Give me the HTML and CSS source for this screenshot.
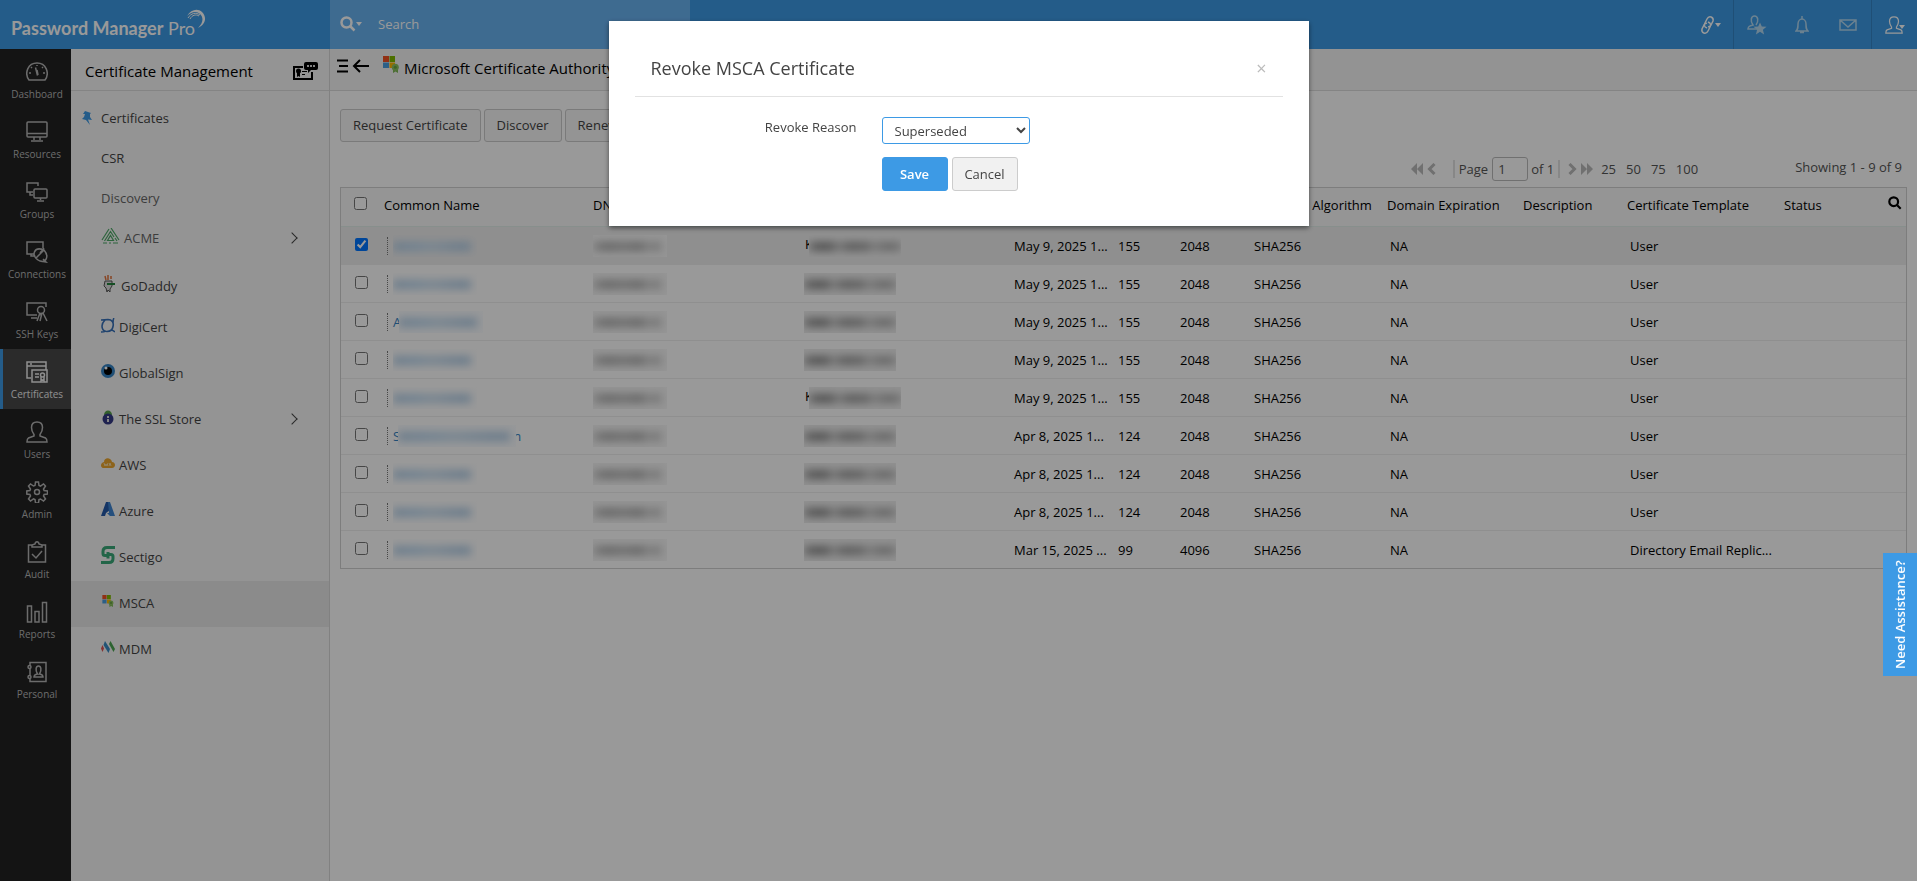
FILE: index.html
```html
<!DOCTYPE html>
<html lang="en">
<head>
    <meta charset="UTF-8">
    <meta name="viewport" content="width=device-width, initial-scale=1.0">
    <title>Password Manager Pro</title>
    <link rel="stylesheet" href="styles.css">
</head>
<body>
    <!-- Shared icons -->
    <svg class="sprite" aria-hidden="true">
        <symbol id="i-user" viewBox="0 0 22 22"><path d="M8 13.500C6 11 5.500 8.500 5.500 6.500C5.500 3 7.800 1 11 1s5.500 2 5.500 5.500c0 2-.5 4.500-2.500 7v1.500l5.500 2c1 .5 1.500 1.500 1.500 4H1c0-2.500.5-3.500 1.500-4L8 15z"/></symbol>
        <symbol id="i-ms" viewBox="0 0 16 17"><path fill="#f25022" d="M0 0h6v6H0z"/><path fill="#7fba00" d="M6.500 0h5.500v6H6.500z"/><path fill="#4a9fe0" d="M0 6.500h6V12H0z"/><path fill="#ffb900" d="M6.500 6.500H12V12H6.500z"/><path fill="#7fb857" d="M10 12h5v5l-2.500-1.500L10 17z"/><circle cx="12.300" cy="11.200" r="3.500" fill="#8cc363"/><circle cx="12.300" cy="11.200" r="1.500" fill="#6aa33f"/></symbol>
        <symbol id="i-lens" viewBox="0 0 16 16"><circle cx="6.500" cy="6.500" r="5"/><path d="M10.500 10.500L14.500 14.500"/></symbol>
    </svg>

    <header class="topbar">
        <a href="#" class="logo"><span><b>Password Manager</b> Pro</span><svg width="22" height="20" viewBox="0 0 22 20"><path d="M1 7C5 0 12-1 16 3c5 5 4 12-4 16 5-5 6-10 2-14C11 2 6 2 1 7z" fill="#fff"/><path d="M2 9C5 4 10 3 14 6M4 10c2-4 6-5 9-3" fill="none" stroke="#fff"/></svg></a>
        <div class="search">
            <svg class="stroke thick" width="16" height="16"><use href="#i-lens"/></svg>
            <span class="caret"></span>
            <input type="text" placeholder="Search" aria-label="Search">
        </div>
        <div class="top-actions">
            <button class="act" aria-label="Links"><svg class="stroke" width="15" height="20" viewBox="0 0 15 20"><path d="M7 13c-3-1-3-3-2-5l2-4c2-4 7-2 6 2l-2 4c-.5 1-1.500 2-3 1.500"/><path d="M8 7c3 1 3 3 2 5l-2 4c-2 4-7 2-6-2l2-4c.5-1 1.500-2 3-1.500"/></svg><span class="caret"></span></button>
            <button class="act dim line" aria-label="Access requests"><svg width="20" height="20" viewBox="0 0 20 20"><path class="stroke" d="M10 14H1c0-2 .5-3 5-4C3 6 4 1 7.500 1S12 6 9 10"/><path fill="currentColor" d="M13 7.500l1.800 4 4.700.3-3.600 2.900 1.200 4.800-4.100-2.700-4.100 2.700 1.200-4.800L6.500 11.800l4.700-.3z"/></svg></button>
            <button class="act dim" aria-label="Alerts"><svg class="stroke" width="14" height="18" viewBox="0 0 14 18"><path d="M1 15h12c-2-2-2-3-2-7 0-3-2-5-4-5S3 5 3 8c0 4 0 5-2 7zM7 3V0M5 16.500h4"/></svg></button>
            <button class="act dim" aria-label="Messages"><svg class="stroke" width="18" height="12" viewBox="0 0 18 12"><path d="M1 1h16v10H1zM1 1l8 7 8-7"/></svg></button>
            <button class="act line" aria-label="My account"><svg class="stroke" width="18" height="18"><use href="#i-user"/></svg><span class="caret over"></span></button>
        </div>
    </header>

    <div class="shell">
        <nav class="mainnav">
            <a href="#"><svg viewBox="0 0 22 22"><path d="M3 19C-2 12 2 2 11 2s13 10 8 17zM9.500 6.500l2 8M11 4v1M5 6l1 1M17 6l-1 1M3 12h2M17 12h2"/><path d="M11 9l1 5"/></svg>Dashboard</a>
            <a href="#"><svg viewBox="0 0 22 22"><rect x="1" y="1" width="20" height="15" rx="1"/><path d="M1 12.500h20M8 16v3M14 16v3M5 20h12"/></svg>Resources</a>
            <a href="#"><svg viewBox="0 0 22 22"><path d="M12 5V2H1v9h6M4 11v3h3"/><rect x="8" y="8" width="13" height="9" rx="1"/><path d="M14.500 17v2M11 20h7"/></svg>Groups</a>
            <a href="#"><svg viewBox="0 0 22 22"><path d="M17 7V1H1v12h7M5 13v2h3M18 9C8 5 5 14 12 19s12-3 6-10L10 17M14 12l4-5M14 20l6 1-3-3"/></svg>Connections</a>
            <a href="#"><svg viewBox="0 0 22 22"><path d="M20 6V2H1v12h10M5 17h6"/><circle cx="15" cy="9" r="3.500"/><path d="M14 12l-3 8M17 12l4 8M16 12l-2 8M15 12v3"/></svg>SSH Keys</a>
            <a href="#" class="active"><svg viewBox="0 0 22 22"><path d="M5 17H1V1h19v8M1 5h19M4 3h2"/><rect x="6" y="9" width="15" height="12"/><path d="M9 13h4M9 16h4M15 16v4l1.500-1 1.500 1v-4"/><circle cx="16.500" cy="14" r="2"/></svg>Certificates</a>
            <a href="#"><svg><use href="#i-user"/></svg>Users</a>
            <a href="#"><svg viewBox="0 0 22 22"><circle cx="11" cy="11" r="2.500"/><path d="M9.500 1h3l.5 3.500 1.500.6L17.500 3l2 2-2 3 .6 1.500 3.400.5v3l-3.400.5-.6 1.500 2 3-2 2-3-2-1.500.6-.5 3.400h-3L9 18.500l-1.500-.6-3 2.100-2-2 2-3-.6-1.500L.8 13v-3l3.100-.5.6-1.500-2-3 2-2 3 2L9 4.500z"/></svg>Admin</a>
            <a href="#"><svg viewBox="0 0 22 22"><path d="M6 4H2.500v17h17V4H16M6 6h10V4l-3-1c-.5-3-3.500-3-4 0L6 4zM6 13l4 4 6-7"/></svg>Audit</a>
            <a href="#"><svg viewBox="0 0 22 22"><path d="M1.500 5h4v16h-4zM9 10.500h4V21H9zM16.500 1.500h4V21h-4z"/></svg>Reports</a>
            <a href="#"><svg viewBox="0 0 22 22"><path d="M4 4V1.500h16v19H4V18M4 8v6M8 16h9c0-2-1-2.500-3.500-3C16 9 15 5 12.500 5S9 9 11.500 13C9 13.500 8 14 8 16z"/><circle cx="3.500" cy="6" r="1.500"/><circle cx="3.500" cy="16" r="1.500"/></svg>Personal</a>
        </nav>

        <aside class="sidebar">
            <div class="side-head">
                <h2>Certificate Management</h2>
                <svg width="26" height="20" viewBox="0 0 26 20"><path d="M11 6H2v12h18v-7" fill="none" stroke="#000" stroke-width="2"/><circle cx="6.500" cy="10" r="2.500"/><path d="M5 11h3v5l-1.500-1L5 16zM10 10h5v1h-5zM10 13h3v1h-3zM14 1h10q2 0 2 2v4q0 2-2 2h-5l-3 3V9h-2q-2 0-2-2V3q0-2 2-2z"/><path d="M15 4h2v2h-2zM18 4h2v2h-2zM21 4h2v2h-2z" fill="#ddd"/></svg>
            </div>
            <ul class="side-list">
                <li class="short pinned"><a href="#"><svg class="pin" width="10" height="14" viewBox="0 0 10 14"><path fill="#3d9ae5" d="M3 0l6 2-1 1v3l2 3-4-.5L8 14 4 9 0 8l2-2 1-3H1z"/></svg>Certificates</a></li>
                <li class="short"><a href="#">CSR</a></li>
                <li class="short light"><a href="#">Discovery</a></li>
                <li class="short light"><a href="#"><svg width="19" height="16" viewBox="0 0 19 16"><path d="M1 12L8 1M3.500 13L9.500 3.500 13 9M6.500 12.500l3-5 3 5zM10 0l8 12M14 10l2 3M2 15h4M8 15h2M12 15h5" fill="none" stroke="#4ca866" stroke-width="1.200"/></svg>ACME</a><span class="chev"></span></li>
                <li class="dropped"><a href="#"><svg width="16" height="18" viewBox="0 0 16 18"><path d="M4 1l1 4M7 0v5M10 1v3" stroke="#e2733c" stroke-width="1.500"/><path d="M4 6h7v5l-2 3v3l-2-2-1 2-1-4-2-2z" fill="#ddd" stroke="#555"/><path d="M6 8h8v2H6z" fill="#24823c"/></svg>GoDaddy</a></li>
                <li><a href="#"><svg width="14" height="15" viewBox="0 0 14 15"><path d="M0 2c2 0 4 0 7-.500 4 0 6 3 5 7-.5 3-3 5-6 5C2 13.500 1 11 1 8c0-2 1-4 3-6M0 14c2 0 3 0 5-1M13 0c-1 1-1 2-1 5M14 14c-1-1-2-2-4-2" fill="none" stroke="#3670b8" stroke-width="1.600"/></svg>DigiCert</a></li>
                <li><a href="#"><svg width="14" height="14" viewBox="0 0 14 14"><circle cx="7" cy="7" r="7" fill="#3583c4"/><circle cx="7" cy="7" r="4"/><circle cx="5" cy="4" r="1.500" fill="#fff"/></svg>GlobalSign</a></li>
                <li><a href="#"><svg width="14" height="15" viewBox="0 0 14 15"><path d="M3 5c0-6 8-6 8 0z" fill="#56a04c"/><circle cx="7" cy="9" r="5.500" fill="#353a85"/><path d="M6 6h2v2H6zM6 9h2v3H6z" fill="#ddd"/></svg>The SSL Store</a><span class="chev"></span></li>
                <li><a href="#"><svg width="14" height="10" viewBox="0 0 14 10"><path d="M3 10C-1 10-1 5 3 4c0-5 7-5 8 0 4 0 4 6 0 6z" fill="#eba52e"/><path d="M3 5l1 3 1-2 1 2 1-3M8 8l1-3 1 3" fill="none" stroke="#f7dca6"/></svg>AWS</a></li>
                <li><a href="#"><svg width="14" height="14" viewBox="0 0 14 14"><path d="M5 0h4v8l-4 3-1 3H0z" fill="#2459a8"/><path d="M7 0h2l5 14H9L6 11h2z" fill="#3e84d0"/></svg>Azure</a></li>
                <li><a href="#"><svg width="14" height="18" viewBox="0 0 14 18"><path d="M14 1.500H6q-4 0-4 4v2q0 2 2 2h3V6M0 16.500h8q4 0 4-4v-2q0-2-2-2H7v4" fill="none" stroke="#3aa878" stroke-width="3"/></svg>Sectigo</a></li>
                <li class="selected"><a href="#"><svg width="14" height="12"><use href="#i-ms"/></svg>MSCA</a></li>
                <li><a href="#"><svg width="14" height="12" viewBox="0 0 14 12"><path d="M1.500 4L3 7.500 1.500 11 0 7.500z" fill="#dc5454"/><path d="M2.500 4L4 0l5 8-1.500 4z" fill="#378bc5"/><path d="M8 3l1.500-3L14 8l-1.500 3z" fill="#4ca652"/></svg>MDM</a></li>
            </ul>
        </aside>

        <main class="content">
            <div class="page-head">
                <svg class="bars" width="32" height="14" viewBox="0 0 32 14"><path d="M0 1.500h11M2 7h9M0 12.500h11M32 7H17M23 1l-6 6 6 6" fill="none" stroke="#000" stroke-width="2"/></svg>
                <svg class="ms" width="16" height="17"><use href="#i-ms"/></svg>
                <h1>Microsoft Certificate Authority</h1>
            </div>

            <div class="work">
                <div class="toolbar">
                    <button class="btn">Request Certificate</button>
                    <button class="btn">Discover</button>
                    <button class="btn">Renew</button>
                    <button class="btn">Revoke</button>
                </div>

                <div class="pager">
                    <svg width="26" height="12" viewBox="0 0 26 12"><path d="M6 0v12L0 6zM12 0v12L6 6z" fill="#bbb"/><path d="M23.500 1l-5 5 5 5" fill="none" stroke="#bbb" stroke-width="3"/></svg>
                    <span class="sep first"></span>
                    <label for="page">Page</label>
                    <input id="page" type="text" value="1">
                    <span>of 1</span>
                    <span class="sep"></span>
                    <svg width="26" height="12" viewBox="0 0 26 12"><path d="M2.500 1l5 5-5 5" fill="none" stroke="#bbb" stroke-width="3"/><path d="M14 0v12l6-6zM20 0v12l6-6z" fill="#bbb"/></svg>
                    <div class="sizes"><a href="#">25</a><a href="#">50</a><a href="#">75</a><a href="#">100</a></div>
                    <span class="count">Showing 1 - 9 of 9</span>
                </div>

                <table class="certs">
                    <colgroup>
                        <col class="w-check"><col class="w-name"><col class="w-name"><col class="w-name"><col class="w-small"><col class="w-days"><col class="w-key"><col class="w-algo"><col class="w-algo"><col class="w-small"><col class="w-template"><col class="w-status">
                    </colgroup>
                    <thead>
                        <tr><th><input type="checkbox" aria-label="Select all"></th><th>Common Name</th><th>DNS Name</th><th>Issuer</th><th>Valid To</th><th>Days</th><th>Key Size</th><th>Signature Algorithm</th><th>Domain Expiration</th><th>Description</th><th>Certificate Template</th><th><div class="last-head">Status <svg class="stroke thick" width="14" height="14"><use href="#i-lens"/></svg></div></th></tr>
                    </thead>
                    <tbody>
                        <tr class="checked"><td><input type="checkbox" checked aria-label="Select row 1"></td><td><a href="#" class="cn"><i class="smudge blue"></i></a></td><td><i class="smudge grey"></i></td><td><span class="under">K</span><i class="smudge dark"></i></td><td>May 9, 2025 1...</td><td>155</td><td>2048</td><td>SHA256</td><td>NA</td><td></td><td>User</td><td></td></tr>
                        <tr><td><input type="checkbox" aria-label="Select row 2"></td><td><a href="#" class="cn"><i class="smudge blue"></i></a></td><td><i class="smudge grey"></i></td><td><i class="smudge dark"></i></td><td>May 9, 2025 1...</td><td>155</td><td>2048</td><td>SHA256</td><td>NA</td><td></td><td>User</td><td></td></tr>
                        <tr><td><input type="checkbox" aria-label="Select row 3"></td><td><a href="#" class="cn"><span class="letter">A</span><i class="smudge blue"></i></a></td><td><i class="smudge grey"></i></td><td><i class="smudge dark"></i></td><td>May 9, 2025 1...</td><td>155</td><td>2048</td><td>SHA256</td><td>NA</td><td></td><td>User</td><td></td></tr>
                        <tr><td><input type="checkbox" aria-label="Select row 4"></td><td><a href="#" class="cn"><i class="smudge blue"></i></a></td><td><i class="smudge grey"></i></td><td><i class="smudge dark"></i></td><td>May 9, 2025 1...</td><td>155</td><td>2048</td><td>SHA256</td><td>NA</td><td></td><td>User</td><td></td></tr>
                        <tr><td><input type="checkbox" aria-label="Select row 5"></td><td><a href="#" class="cn"><i class="smudge blue"></i></a></td><td><i class="smudge grey"></i></td><td><span class="under">K</span><i class="smudge dark"></i></td><td>May 9, 2025 1...</td><td>155</td><td>2048</td><td>SHA256</td><td>NA</td><td></td><td>User</td><td></td></tr>
                        <tr><td><input type="checkbox" aria-label="Select row 6"></td><td><a href="#" class="cn"><span class="letter">S</span><i class="smudge blue long"></i><span class="tail">n</span></a></td><td><i class="smudge grey"></i></td><td><i class="smudge dark"></i></td><td>Apr 8, 2025 1...</td><td>124</td><td>2048</td><td>SHA256</td><td>NA</td><td></td><td>User</td><td></td></tr>
                        <tr><td><input type="checkbox" aria-label="Select row 7"></td><td><a href="#" class="cn"><i class="smudge blue"></i></a></td><td><i class="smudge grey"></i></td><td><i class="smudge dark"></i></td><td>Apr 8, 2025 1...</td><td>124</td><td>2048</td><td>SHA256</td><td>NA</td><td></td><td>User</td><td></td></tr>
                        <tr><td><input type="checkbox" aria-label="Select row 8"></td><td><a href="#" class="cn"><i class="smudge blue"></i></a></td><td><i class="smudge grey"></i></td><td><i class="smudge dark"></i></td><td>Apr 8, 2025 1...</td><td>124</td><td>2048</td><td>SHA256</td><td>NA</td><td></td><td>User</td><td></td></tr>
                        <tr><td><input type="checkbox" aria-label="Select row 9"></td><td><a href="#" class="cn"><i class="smudge blue"></i></a></td><td><i class="smudge grey"></i></td><td><i class="smudge dark"></i></td><td>Mar 15, 2025 ...</td><td>99</td><td>4096</td><td>SHA256</td><td>NA</td><td></td><td>Directory Email Replic...</td><td></td></tr>
                    </tbody>
                </table>
            </div>
        </main>
    </div>

    <!-- Revoke dialog -->
    <div class="overlay">
        <form class="dialog" role="dialog" aria-labelledby="dialog-title">
            <div class="dialog-head">
                <h3 id="dialog-title">Revoke MSCA Certificate</h3>
                <button type="button" class="close" aria-label="Close">×</button>
            </div>
            <div class="dialog-body">
                <label for="reason">Revoke Reason</label>
                <div class="fields">
                    <select id="reason">
                        <option>Unspecified</option>
                        <option>Key Compromise</option>
                        <option selected>Superseded</option>
                    </select>
                    <div class="dialog-actions">
                        <button type="button" class="btn primary">Save</button>
                        <button type="button" class="btn">Cancel</button>
                    </div>
                </div>
            </div>
        </form>
    </div>

    <button class="assist">Need Assistance?</button>
</body>
</html>
```
FILE: styles.css
```css
* {
    box-sizing: border-box;
}

body {
    margin: 0;
    min-height: 100vh;
    display: flex;
    flex-direction: column;
    font-family: "Open Sans", "Noto Sans", sans-serif;
    font-size: 13px;
    line-height: 18px;
    color: #000;
    background: #fff;
}

a {
    color: inherit;
    text-decoration: none;
}

button, input, select {
    font: inherit;
    color: inherit;
}

h1, h2, h3 {
    margin: 0;
    font-size: 15px;
    font-weight: 400;
    line-height: 20px;
}

svg {
    flex: none;
}

.sprite {
    position: absolute;
    width: 0;
    height: 0;
}

.stroke {
    fill: none;
    stroke: currentColor;
    stroke-width: 1.5;
}

.thick {
    stroke-width: 2.5;
}

.caret {
    border: 3px solid transparent;
    border-top: 4px solid currentColor;
    border-bottom: 0;
}

.caret.over {
    margin: 4px 0 0 -4px;
}

/* Top bar */
.topbar {
    display: flex;
    height: 49px;
    background: #3d9ae5;
    color: #fff;
}

.logo {
    display: flex;
    align-items: center;
    width: 330px;
    padding: 6px 0 0 11px;
    font-family: Lato, sans-serif;
    font-size: 18px;
    white-space: nowrap;
}

.logo svg {
    margin: 0 0 18px -9px;
}

.search {
    display: flex;
    align-items: center;
    width: 360px;
    padding: 0 0 2px 10px;
    background: #68b2f1;
}

.search input {
    width: 200px;
    margin-left: 16px;
    padding: 0;
    border: 0;
    background: none;
}

.search input::placeholder {
    color: #fff;
    opacity: 1;
}

.top-actions {
    display: flex;
    margin-left: auto;
}

.act {
    display: flex;
    align-items: center;
    justify-content: center;
    width: 46px;
    padding: 0;
    border: 0;
    background: none;
}

.act.dim {
    color: #b3d8f0;
}

.act.line {
    border-left: 1px solid #3484c5;
}

.shell {
    display: flex;
    flex: 1;
}

/* Left navigation */
.mainnav {
    width: 71px;
    background: #222;
}

.mainnav a {
    display: flex;
    flex-direction: column;
    align-items: center;
    gap: 2px;
    height: 60px;
    padding-top: 12px;
    border-left: 3px solid transparent;
    font-size: 10px;
    color: #b5b5b5;
}

.mainnav svg {
    width: 22px;
    height: 22px;
    fill: none;
    stroke: currentColor;
    stroke-width: 1.5;
}

.mainnav .active {
    border-color: #3d9ae5;
    background: #484848;
    color: #eee;
}

/* Certificate menu */
.sidebar {
    width: 259px;
    border-right: 1px solid #d8d8d8;
    background: #f7f7f7;
}

.side-head {
    display: flex;
    align-items: center;
    justify-content: space-between;
    height: 42px;
    padding: 2px 11px 0 14px;
    border-bottom: 1px solid #dcdcdc;
}

.side-list {
    margin: 0;
    padding: 8px 0 0;
    list-style: none;
}

.side-list li {
    display: flex;
    align-items: center;
    justify-content: space-between;
    height: 46px;
    padding: 0 33px 2px 30px;
    color: #444;
}

.side-list a {
    display: flex;
    align-items: center;
    gap: 4px;
}

.side-list svg {
    margin-bottom: 4px;
}

.side-list .short {
    height: 40px;
}

.side-list .light {
    color: #666;
}

.side-list .pinned {
    padding-left: 11px;
}

.side-list .pin {
    margin: 0 5px 0 0;
}

.side-list .dropped {
    padding-top: 10px;
}

.side-list .selected {
    background: #e8e8e8;
}

.chev {
    width: 8px;
    height: 8px;
    border-top: 1px solid #444;
    border-right: 1px solid #444;
    transform: rotate(45deg);
}

/* Page */
.content {
    flex: 1;
    min-width: 0;
}

.page-head {
    display: flex;
    height: 42px;
    padding: 7px 0 0 7px;
    border-bottom: 1px solid #dcdcdc;
    background: #f5f5f5;
}

.page-head .bars {
    margin-top: 3px;
}

.page-head .ms {
    margin: 0 5px 0 14px;
}

.page-head h1 {
    margin-top: 2px;
}

.work {
    padding: 18px 10px;
}

.toolbar {
    display: flex;
    gap: 3px;
}

.btn {
    height: 33px;
    padding: 0 12px;
    border: 1px solid #ccc;
    border-radius: 3px;
    background: #f1f1f1;
    color: #444;
}

.toolbar .btn {
    padding-bottom: 2px;
    background: #f7f7f7;
}

.pager {
    display: flex;
    align-items: center;
    justify-content: flex-end;
    height: 24px;
    margin: 15px 5px 6px 0;
    color: #555;
}

.pager .sep {
    width: 2px;
    height: 18px;
    margin: 0 7px 0 4px;
    background: #e2e2e2;
}

.pager .first {
    margin: 0 4px 0 16px;
}

.pager input {
    width: 36px;
    height: 24px;
    margin: 0 3px 0 4px;
    padding: 0 5px;
    border: 1px solid #bbb;
    border-radius: 3px;
    background: none;
}

.sizes {
    display: flex;
    gap: 10px;
    margin: 0 97px 0 8px;
}

.count {
    margin-bottom: 4px;
}

/* Certificates table */
.certs {
    width: 100%;
    table-layout: fixed;
    border-collapse: separate;
    border-spacing: 0;
    border: 1px solid #d0d0d0;
    white-space: nowrap;
}

.w-check { width: 38px; }
.w-name { width: 209px; }
.w-small { width: 104px; }
.w-days { width: 62px; }
.w-key { width: 74px; }
.w-algo { width: 136px; }
.w-template { width: 157px; }
.w-status { width: 127px; }

.certs th {
    height: 38px;
    padding: 0 0 5px 5px;
    background: #f9f9f9;
    font-weight: 400;
    text-align: left;
}

.certs td {
    height: 38px;
    padding: 0 0 0 8px;
    border-top: 1px solid #eee;
}

.certs th:first-child {
    padding-left: 13px;
}

.certs td:first-child {
    padding-left: 14px;
}

.certs input {
    display: block;
    width: 13px;
    height: 13px;
    margin: 0 0 3px;
}

.checked td {
    border-top-color: #e2eeea;
    background: #efefef;
}

.last-head {
    display: flex;
    justify-content: space-between;
    padding-right: 4px;
}

.cn {
    display: flex;
    align-items: center;
    height: 18px;
    padding-left: 5px;
    border-left: 1px dotted #777;
    color: #3583c4;
}

/* Hidden values */
.smudge {
    position: relative;
    display: inline-block;
    width: 84px;
    height: 22px;
    overflow: hidden;
    vertical-align: middle;
}

.smudge::before {
    content: "";
    position: absolute;
    inset: 7px 6px 6px 0;
    filter: blur(4px);
}

.smudge.long {
    width: 118px;
}

.blue::before {
    background: linear-gradient(90deg, #b4cfe8, #bcd8f0 30%, #c8def0 50%, #b4cfe8 85%);
}

.letter + .blue {
    margin-left: -2px;
    background: #fbfdff;
}

.tail {
    margin-left: -3px;
}

.grey {
    width: 74px;
    margin-left: -3px;
    background: #f8f8f8;
}

.grey::before {
    background: linear-gradient(90deg, #ccc, #aaa 20%, #b8b8b8 45%, #aaa 70%, #d4d4d4 82%, #bbb);
}

.dark {
    width: 92px;
    margin-left: -1px;
    background: #f2f2f2;
}

.under + .dark {
    margin-left: -4px;
}

.dark::before {
    right: 0;
    background: linear-gradient(90deg, #aaa, #888 12%, #909090 25%, #ccc 32%, #999 42%, #a0a0a0 62%, #ccc 70%, #aaa 85%, #bbb);
}

/* Dialog */
.overlay {
    position: fixed;
    inset: 0;
    padding-top: 21px;
    background: rgba(0, 0, 0, 0.4);
}

.dialog {
    width: 700px;
    height: 205px;
    margin: 0 auto;
    padding: 0 26px;
    background: #fff;
    box-shadow: 0 2px 5px rgba(0, 0, 0, 0.5);
    color: #444;
}

.dialog-head {
    display: flex;
    align-items: center;
    justify-content: space-between;
    height: 76px;
    padding: 18px 16px 0;
    border-bottom: 1px solid #e2e2e2;
}

.dialog-head h3 {
    font-size: 18px;
    line-height: 24px;
}

.close {
    padding: 0;
    border: 0;
    background: none;
    font-size: 18px;
    color: #bbb;
}

.dialog-body {
    display: flex;
    gap: 25px;
    padding-top: 20px;
}

.dialog-body label {
    width: 222px;
    padding-top: 1px;
    text-align: right;
}

.fields select {
    display: block;
    width: 148px;
    height: 27px;
    padding: 0 8px;
    border: 1px solid #3d9ae5;
    border-radius: 3px;
    background: #fff;
}

.dialog-actions {
    display: flex;
    gap: 4px;
    margin-top: 13px;
}

.dialog-actions .btn {
    width: 66px;
    height: 34px;
    padding: 0;
}

.dialog-actions .primary {
    border-color: #3d9ae5;
    background: #3d9ae5;
    color: #fff;
    font-weight: 600;
}

.assist {
    position: fixed;
    top: 553px;
    right: 0;
    width: 34px;
    height: 123px;
    padding: 0;
    border: 0;
    background: #3d9ae5;
    color: #fff;
    font-weight: 600;
    writing-mode: vertical-rl;
    transform: rotate(180deg);
}
```
